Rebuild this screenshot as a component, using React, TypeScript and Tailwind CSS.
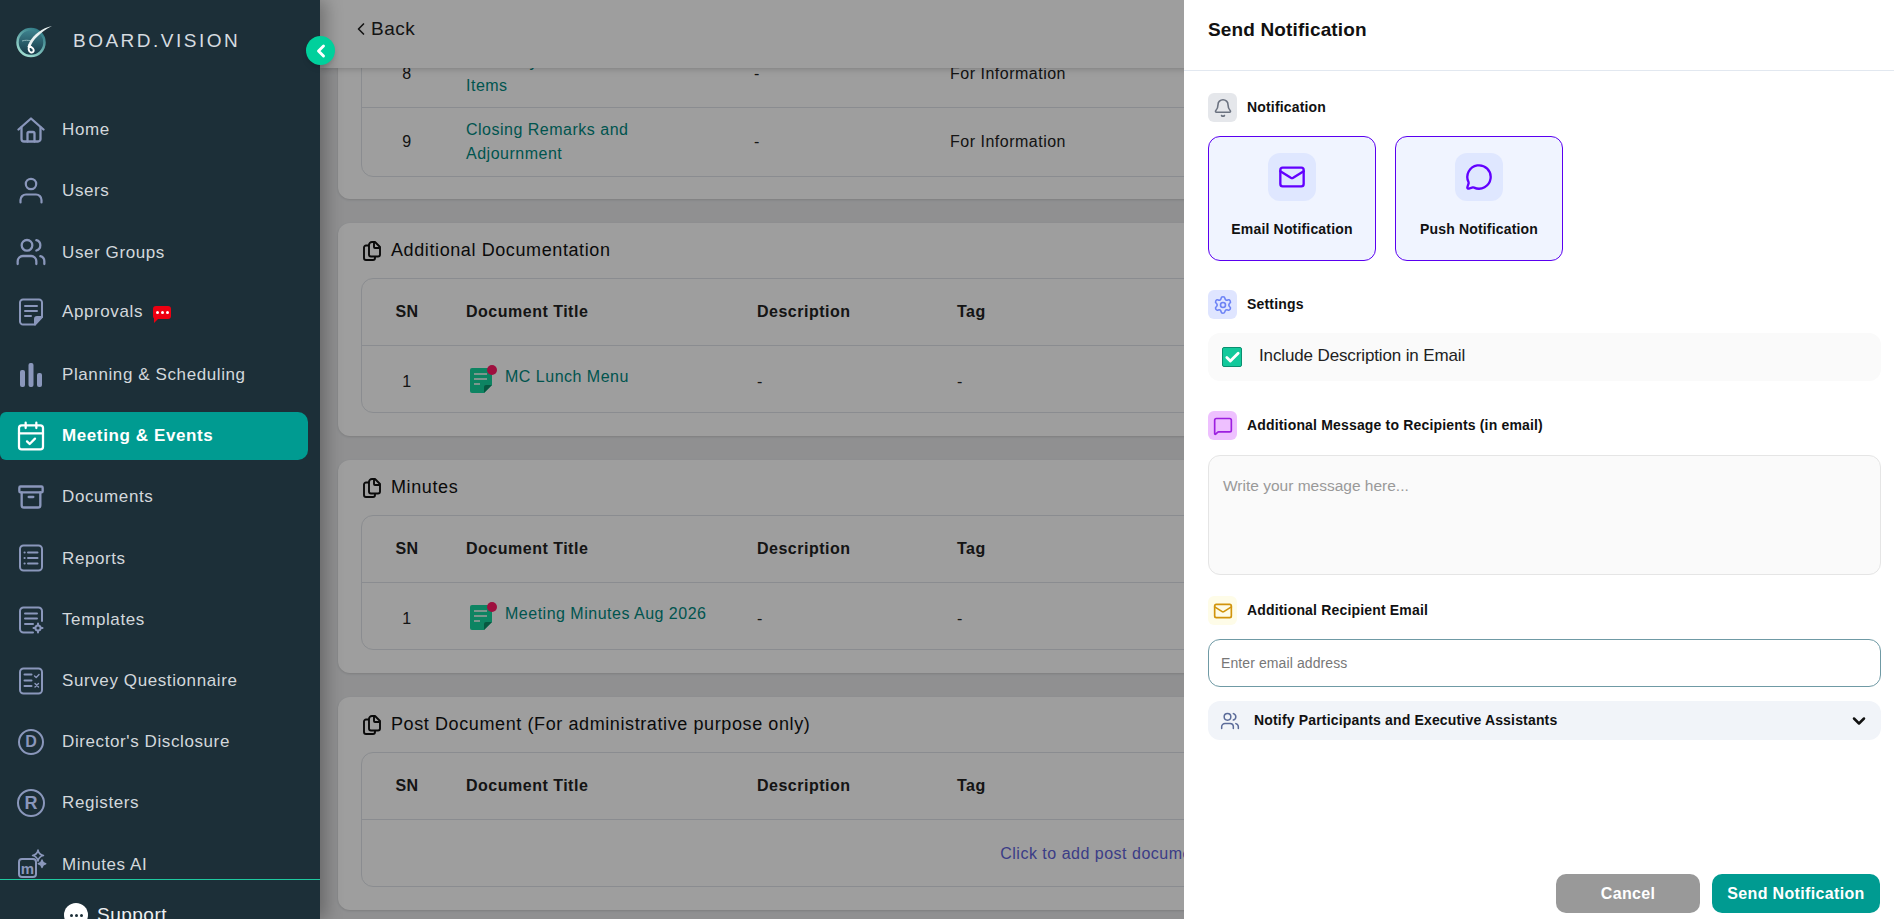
import type { ReactNode } from "react";
import {
  Archive,
  Bell,
  CalendarCheck,
  Check,
  ChevronDown,
  ChevronLeft,
  Mail,
  MessageCircle,
  MessageSquare,
  Settings,
  Users,
} from "lucide-react";

const iconClass = "w-7 h-7 text-[#8a97bb]";

function HomeIcon() {
  return (
    <svg viewBox="0 0 28 28" fill="none" stroke="currentColor" strokeWidth="2.3" strokeLinejoin="round" strokeLinecap="round" className={iconClass}>
      <path d="M1.5 13.500 14 2.500l12.500 11" />
      <path d="M4.500 11.500v11.500a2.500 2.500 0 0 0 2.500 2.500h14a2.500 2.500 0 0 0 2.500-2.500V11.500" />
      <path d="M10.500 25.500v-8a1.500 1.500 0 0 1 1.500-1.500h4a1.500 1.500 0 0 1 1.500 1.500v8" />
    </svg>
  );
}

function UserIcon() {
  return (
    <svg viewBox="0 0 28 28" fill="none" stroke="currentColor" strokeWidth="2.2" strokeLinecap="round" className={iconClass}>
      <circle cx="14" cy="7" r="5.200" />
      <path d="M3.500 25.500v-2.500a5.500 5.500 0 0 1 5.500-5.500h10a5.500 5.500 0 0 1 5.500 5.500v2.500" />
    </svg>
  );
}

function ApprovalsIcon() {
  return (
    <svg viewBox="0 0 28 28" fill="none" stroke="currentColor" strokeWidth="2" strokeLinecap="round" strokeLinejoin="round" className={iconClass}>
      <path d="M18 26.500H6a3 3 0 0 1-3-3v-19a3 3 0 0 1 3-3h16a3 3 0 0 1 3 3V19z" />
      <path d="M18 26.500V21a2 2 0 0 1 2-2h5" fill="currentColor" />
      <path d="M8 8h12M8 13h12M8 18h6" />
    </svg>
  );
}

function BarsIcon() {
  return (
    <svg viewBox="0 0 28 28" fill="currentColor" className={iconClass}>
      <rect x="3" y="9" width="5" height="17" rx="2" />
      <rect x="11.500" y="2" width="5" height="24" rx="2" />
      <rect x="20" y="12" width="5" height="14" rx="2" />
    </svg>
  );
}

function ReportsIcon() {
  return (
    <svg viewBox="0 0 28 28" fill="none" stroke="currentColor" strokeWidth="2" strokeLinecap="round" className={iconClass}>
      <rect x="3" y="1.500" width="22" height="25" rx="3.500" />
      <path d="M11 8.500h9.500M11 14h9.500M11 19.500h9.500M7.500 8.500h.2M7.500 14h.2M7.500 19.500h.2" />
    </svg>
  );
}

function TemplatesIcon() {
  return (
    <svg viewBox="0 0 28 28" fill="none" stroke="currentColor" strokeWidth="2" strokeLinecap="round" className={iconClass}>
      <path d="M25 15V5a3.500 3.500 0 0 0-3.500-3.500h-15A3.500 3.500 0 0 0 3 5v18a3.500 3.500 0 0 0 3.500 3.500H16" />
      <path d="M8 7.500h12M8 12.500h12M8 18h8" />
      <circle cx="21" cy="22" r="2.600" />
      <path d="M21 17.500v1.200M21 25.300v1.200M16.500 22h1.200M24.300 22h1.200" />
    </svg>
  );
}

function SurveyIcon() {
  return (
    <svg viewBox="0 0 28 28" fill="none" stroke="currentColor" strokeWidth="2" strokeLinecap="round" strokeLinejoin="round" className={iconClass}>
      <rect x="3" y="1.500" width="22" height="25" rx="3.500" />
      <path d="M7.500 7.500h7M7.500 13.500h7M7.500 19h7" />
      <path d="m17.500 9 1.700 1.600L22 7.500M18 16.500l3.500 3.500M21.500 16.500 18 20" strokeWidth="1.400" />
    </svg>
  );
}

function LetterIcon({ letter, big }: { letter: string; big?: boolean }) {
  return (
    <span
      className={`flex items-center justify-center rounded-full border-2 border-[#8a97bb] text-[#8a97bb] font-bold tracking-normal ${
        big ? "w-7 h-7 text-[18px]" : "w-[26px] h-[26px] text-[16px]"
      }`}
    >
      {letter}
    </span>
  );
}

function MinutesAiIcon() {
  return (
    <span className="relative block w-7 h-7 text-[#8a97bb]">
      <span className="absolute left-px bottom-0 w-[19px] h-[20px] rounded-[4px] border-2 border-[#8a97bb] flex items-center justify-center text-[15px] leading-none font-bold tracking-normal">
        m
      </span>
      <svg viewBox="0 0 28 28" fill="none" stroke="currentColor" strokeWidth="1.500" strokeLinejoin="round" className="absolute inset-0 w-7 h-7 overflow-visible">
        <path d="M21 0c.7 3.600 1.900 4.900 5.500 5.500-3.600.7-4.800 1.900-5.500 5.500-.7-3.600-1.900-4.800-5.500-5.500 3.600-.6 4.800-1.900 5.500-5.500z" />
        <path d="M25 10c.4 2.400 1.300 3.300 3.700 3.700-2.400.4-3.300 1.300-3.700 3.700-.4-2.400-1.300-3.300-3.700-3.700 2.400-.4 3.300-1.300 3.700-3.700z" fill="currentColor" />
      </svg>
    </span>
  );
}

function Logo() {
  return (
    <svg viewBox="0 0 38 32" className="w-[38px] h-8">
      <defs>
        <linearGradient id="logoRing" x1="0.8" y1="0" x2="0.2" y2="1">
          <stop offset="0" stopColor="#2c7783" />
          <stop offset="1" stopColor="#a3e0d4" />
        </linearGradient>
        <linearGradient id="logoFill" x1="0" y1="0" x2="0" y2="1">
          <stop offset="0" stopColor="#3f8591" />
          <stop offset="1" stopColor="#153644" />
        </linearGradient>
      </defs>
      <circle cx="15" cy="16.500" r="13.500" fill="url(#logoFill)" stroke="url(#logoRing)" strokeWidth="2.500" />
      <path d="M6 15c3-1 6-1 9 0" fill="none" stroke="#8fb8bd" strokeWidth="1" />
      <path d="M36 0C26 2 18 8 13 17c-.6 1-1 2-1 3l2.500 1c2-7 10-15 21.500-21z" fill="#e8f1f1" />
      <path d="M13.500 19c-1.500 3-1 7 1.500 7.500 2.500.5 3.500-2 2-4s-3-2-4.500-2" fill="none" stroke="#ffffff" strokeWidth="2" strokeLinecap="round" />
    </svg>
  );
}

const navItems: { label: string; icon: ReactNode; active?: boolean; badge?: boolean }[] = [
  { label: "Home", icon: <HomeIcon /> },
  { label: "Users", icon: <UserIcon /> },
  { label: "User Groups", icon: <Users className="w-8 h-8 text-[#8a97bb]" strokeWidth={1.7} /> },
  { label: "Approvals", icon: <ApprovalsIcon />, badge: true },
  { label: "Planning & Scheduling", icon: <BarsIcon /> },
  { label: "Meeting & Events", icon: <CalendarCheck className="w-8 h-8 text-white" strokeWidth={1.7} />, active: true },
  { label: "Documents", icon: <Archive className={iconClass} strokeWidth={2} /> },
  { label: "Reports", icon: <ReportsIcon /> },
  { label: "Templates", icon: <TemplatesIcon /> },
  { label: "Survey Questionnaire", icon: <SurveyIcon /> },
  { label: "Director's Disclosure", icon: <LetterIcon letter="D" /> },
  { label: "Registers", icon: <LetterIcon letter="R" big /> },
  { label: "Minutes AI", icon: <MinutesAiIcon /> },
];

function Sidebar() {
  return (
    <aside className="relative z-30 w-80 h-full shrink-0 flex flex-col bg-[#1c2f38] shadow-[6px_0_16px_rgba(0,0,0,0.28)]">
      <div className="h-[106px] shrink-0 flex items-start pl-4 pt-[26px]">
        <Logo />
        <span className="ml-[19px] mt-1 text-[19px] leading-[22px] tracking-[2.5px] text-[#d6dce0]">BOARD.VISION</span>
      </div>
      <button className="absolute left-[306px] top-9 w-[29px] h-[29px] rounded-full bg-[#00d09c] flex items-center justify-center shadow-md">
        <ChevronLeft className="w-5 h-5 text-white" strokeWidth={3.5} />
      </button>

      <nav className="flex-1 min-h-0 overflow-hidden flex flex-col gap-[13.2px]">
        {navItems.map((item) => (
          <a
            key={item.label}
            className={`h-12 w-[308px] shrink-0 rounded-r-[10px] rounded-l-md flex items-center text-[17px] tracking-[0.6px] ${
              item.active ? "bg-[#009b91] text-white font-bold" : "text-[#d3d8dc]"
            } ${item.badge ? "pb-[3px]" : ""}`}
          >
            <span className="w-[62px] shrink-0 flex justify-center">{item.icon}</span>
            {item.label}
            {item.badge && (
              <span className="relative ml-[10px] w-[18px] h-[13px] rounded-[3px] bg-[#ee0011] flex items-center justify-center gap-[2px]">
                <i className="w-[3px] h-[3px] rounded-full bg-white" />
                <i className="w-[3px] h-[3px] rounded-full bg-white" />
                <i className="w-[3px] h-[3px] rounded-full bg-white" />
                <i className="absolute left-[1px] bottom-[-4px] w-0 h-0 border-t-[5px] border-r-[5px] border-t-[#ee0011] border-r-transparent" />
              </span>
            )}
          </a>
        ))}
      </nav>

      <div className="h-10 shrink-0 border-t border-[#1fc9a0] pl-16 pt-[23px] flex items-start gap-[9px] text-[19px] leading-6 text-[#eef1f2]">
        <span className="w-6 h-6 rounded-full bg-white flex items-center justify-center gap-[2px] shrink-0">
          <i className="w-[3px] h-[3px] rounded-full bg-[#1c2f38]" />
          <i className="w-[3px] h-[3px] rounded-full bg-[#1c2f38]" />
          <i className="w-[3px] h-[3px] rounded-full bg-[#1c2f38]" />
        </span>
        Support
      </div>
    </aside>
  );
}

function FilesIcon() {
  return (
    <svg viewBox="0 0 18 20" fill="none" stroke="currentColor" strokeWidth="1.900" strokeLinejoin="round" className="w-[18px] h-5 text-[#111]">
      <path d="M6 4.500H3a2 2 0 0 0-2 2v10.500a2 2 0 0 0 2 2h7a2 2 0 0 0 2-2v-1" />
      <path d="M9 1h3l5 5v7.500a2 2 0 0 1-2 2H8a2 2 0 0 1-2-2V4a3 3 0 0 1 3-3z" />
      <path d="M11 1.500V6a1 1 0 0 0 1 1h4.500" />
    </svg>
  );
}

function DocIcon() {
  return (
    <span className="relative block w-[24px] h-[27px]">
      <svg viewBox="0 0 22 25" className="absolute left-0 bottom-0 w-[22px] h-[25px]">
        <path d="M2 0h18a2 2 0 0 1 2 2v15l-8 8H2a2 2 0 0 1-2-2V2a2 2 0 0 1 2-2z" fill="#16d69f" />
        <path d="M14 25v-6a2 2 0 0 1 2-2h6z" fill="#0a8f68" />
        <path d="M4 6h13M4 11h13M4 16h6" stroke="#c6f2e4" strokeWidth="2" />
      </svg>
      <i className="absolute right-[-3px] top-[-1px] w-[10px] h-[10px] rounded-full bg-[#ff1a66]" />
    </span>
  );
}

const docColumns = "grid grid-cols-[104px_291px_200px_1fr]";

function DocSection({ title, doc }: { title: string; doc?: string }) {
  return (
    <section className="h-[213px] shrink-0 rounded-xl bg-white px-[23px] shadow-sm">
      <h2 className="h-[55px] pl-[2px] flex items-center gap-[10px] text-[18px] tracking-[0.6px] text-[#111]">
        <FilesIcon />
        {title}
      </h2>
      <div className="h-[135px] rounded-xl border border-[#dfe3e8]">
        <div className={`${docColumns} h-[67px] items-center border-b border-[#dfe3e8] font-bold text-[16px] text-[#222]`}>
          <span className="text-center pr-[14px]">SN</span>
          <span>Document Title</span>
          <span>Description</span>
          <span>Tag</span>
        </div>
        {doc ? (
          <div className={`${docColumns} h-[67px] items-center text-[#222]`}>
            <span className="text-center pr-[14px] pt-1">1</span>
            <span className="flex items-center gap-[11px] pl-[4px] text-[#00897f]">
              <DocIcon />
              <span className="-mt-[6px]">{doc}</span>
            </span>
            <span className="pt-1">-</span>
            <span className="pt-1">-</span>
          </div>
        ) : (
          <div className="h-[67px] flex items-center justify-center pr-1 text-[#5f63d9]">Click to add post documents</div>
        )}
      </div>
    </section>
  );
}

function AgendaCard() {
  const rows = [
    { sn: 8, title: ["Summary of Action", "Items"] },
    { sn: 9, title: ["Closing Remarks and", "Adjournment"] },
  ];
  return (
    <section className="shrink-0 rounded-xl bg-white px-[23px] pb-[22px] shadow-sm">
      <div className="rounded-xl border border-[#dfe3e8]">
        {rows.map((row, idx) => (
          <div
            key={row.sn}
            className={`grid grid-cols-[104px_288px_196px_1fr] h-[68px] items-center text-[#222] ${idx === 0 ? "border-b border-[#dfe3e8]" : ""}`}
          >
            <span className="text-center pr-[14px]">{row.sn}</span>
            <a className="text-[#00897f] leading-6">
              {row.title[0]}
              <br />
              {row.title[1]}
            </a>
            <span>-</span>
            <span>For Information</span>
          </div>
        ))}
      </div>
    </section>
  );
}

function MainContent() {
  return (
    <main className="flex-1 min-w-0 h-full flex flex-col bg-[#e8e9eb]">
      <header className="relative z-10 h-[68px] shrink-0 bg-white shadow-md pl-[31px] pt-[18px] flex items-start">
        <span className="flex items-center text-[19px] leading-[22px] text-[#222]">
          <ChevronLeft className="w-5 h-5" strokeWidth={2} />
          Back
        </span>
      </header>
      <div className="flex-1 min-h-0 overflow-hidden pl-[18px] pr-[13px]">
        <div className="-mt-[29px] flex flex-col gap-6">
          <AgendaCard />
          <DocSection title="Additional Documentation" doc="MC Lunch Menu" />
          <DocSection title="Minutes" doc="Meeting Minutes Aug 2026" />
          <DocSection title="Post Document (For administrative purpose only)" />
        </div>
      </div>
    </main>
  );
}

function SectionLabel({ icon, boxClass, label }: { icon: ReactNode; boxClass: string; label: string }) {
  return (
    <div className="h-[29px] flex items-center gap-[10px]">
      <span className={`w-[29px] h-[29px] rounded-md flex items-center justify-center ${boxClass}`}>{icon}</span>
      <span className="text-[14px] tracking-[0.17px] font-bold text-[#111]">{label}</span>
    </div>
  );
}

function ChannelCard({ icon, label }: { icon: ReactNode; label: string }) {
  return (
    <div className="w-[168px] h-[125px] rounded-xl border border-[#5a00f0] bg-[#f0f4ff] flex flex-col items-center pt-4">
      <span className="w-12 h-12 rounded-xl bg-[#dfe7ff] flex items-center justify-center">{icon}</span>
      <span className="mt-[18px] text-[14px] tracking-[0.17px] leading-5 font-bold text-[#111]">{label}</span>
    </div>
  );
}

function NotificationPanel() {
  return (
    <div className="absolute z-20 right-0 top-0 bottom-0 w-[710px] bg-white flex flex-col">
      <div className="h-[71px] shrink-0 border-b border-[#e2e8f0] pl-6 pt-[18px] text-[19px] leading-6 tracking-[0.15px] font-bold text-[#111]">
        Send Notification
      </div>

      <div className="flex-1 min-h-0 pl-6 pr-[13px] pt-[22px]">
        <SectionLabel
          icon={<Bell className="w-5 h-5 text-[#6b7280]" strokeWidth={1.9} />}
          boxClass="bg-[#e5e7eb]"
          label="Notification"
        />
        <div className="mt-[14px] flex gap-[19px]">
          <ChannelCard icon={<Mail className="w-7 h-7 text-[#6200ff]" strokeWidth={2} />} label="Email Notification" />
          <ChannelCard icon={<MessageCircle className="w-7 h-7 text-[#6200ff]" strokeWidth={2} />} label="Push Notification" />
        </div>

        <div className="mt-[29px]">
          <SectionLabel
            icon={<Settings className="w-5 h-5 text-[#6c82f5]" strokeWidth={1.9} />}
            boxClass="bg-[#dfe5ff]"
            label="Settings"
          />
        </div>
        <div className="mt-[14px] h-12 rounded-xl bg-[#fafafa] flex items-center pl-[14px] text-[17px] tracking-[-0.13px] text-[#222]">
          <span className="w-5 h-5 rounded-[2px] border border-[#0a8f70] bg-[#12c99b] flex items-center justify-center">
            <Check className="w-[17px] h-[17px] text-white" strokeWidth={4} />
          </span>
          <span className="ml-[17px] -mt-[2px]">Include Description in Email</span>
        </div>

        <div className="mt-[30px]">
          <SectionLabel
            icon={<MessageSquare className="w-5 h-5 text-[#9d1fe0]" strokeWidth={2} />}
            boxClass="bg-[#eec0ff]"
            label="Additional Message to Recipients (in email)"
          />
        </div>
        <textarea
          placeholder="Write your message here..."
          className="mt-[15px] block w-full h-[120px] resize-none rounded-xl border border-[#e5e5e5] bg-[#fafafa] pl-[14px] pr-[14px] py-[20px] text-[15.5px] leading-5 tracking-normal outline-none placeholder:text-[#999]"
        />

        <div className="mt-[21px]">
          <SectionLabel
            icon={<Mail className="w-5 h-5 text-[#d1940c]" strokeWidth={2} />}
            boxClass="bg-[#fefce8]"
            label="Additional Recipient Email"
          />
        </div>
        <input
          placeholder="Enter email address"
          className="mt-[14px] block w-full h-12 rounded-xl border border-[#6f9aa5] bg-white px-3 text-[14px] tracking-[0.1px] outline-none placeholder:text-[#777]"
        />

        <div className="mt-[14px] h-[39px] rounded-xl bg-[#f1f4f9] flex items-center pl-[12px] pr-[12px]">
          <Users className="w-5 h-5 text-[#5b6b99]" strokeWidth={1.8} />
          <span className="ml-[14px] flex-1 text-[14px] tracking-[0.17px] font-bold text-[#111]">Notify Participants and Executive Assistants</span>
          <ChevronDown className="w-5 h-5 text-[#111]" strokeWidth={3} />
        </div>
      </div>

      <div className="shrink-0 flex justify-end gap-3 pr-[14px] pb-[6px]">
        <button className="w-36 h-[39px] rounded-[10px] bg-[#999] text-white text-[16px] font-bold tracking-[0.3px]">Cancel</button>
        <button className="w-[168px] h-[39px] rounded-[10px] bg-[#009b91] text-white text-[16px] font-bold tracking-[0.35px]">Send Notification</button>
      </div>
    </div>
  );
}

export default function App() {
  return (
    <div className="relative h-screen w-full overflow-hidden flex font-['Liberation_Sans',Arial,sans-serif] text-[16px] tracking-[0.5px]">
      <Sidebar />
      <MainContent />
      {/* dim layer under the drawer */}
      <div className="absolute inset-0 z-[15] bg-black/[0.38]" />
      <NotificationPanel />
    </div>
  );
}
